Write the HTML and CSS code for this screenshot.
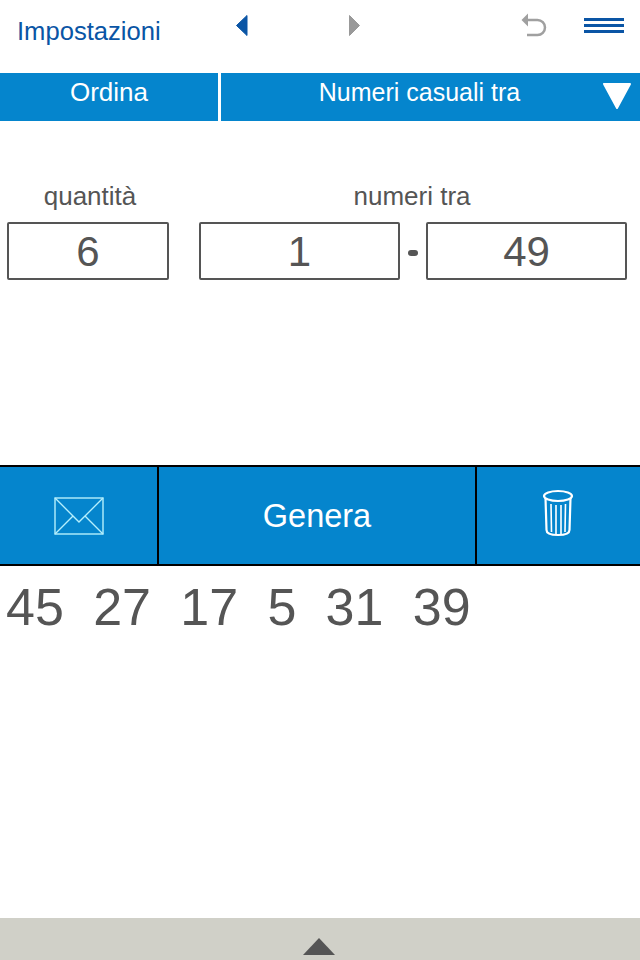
FILE: index.html
```html
<!DOCTYPE html>
<html lang="it">
<head>
    <meta charset="UTF-8">
    <meta name="viewport" content="width=device-width, initial-scale=1.0">
    <title>Numeri casuali</title>
    <link rel="stylesheet" href="styles.css">
</head>
<body>
    <div class="page">
        <header class="top-bar">
            <a class="settings-link">Impostazioni</a>
            <svg class="nav-icon" width="13" height="24" viewBox="0 0 13 24"><path d="M12 2.500V22.500L1.500 12.500Z" fill="#0a55a5" stroke="#0a55a5" stroke-linejoin="round"/></svg>
            <svg class="nav-icon" width="13" height="24" viewBox="0 0 13 24"><path d="M1.500 2.500V22.500L11.500 12.500Z" fill="#999" stroke="#999" stroke-linejoin="round"/></svg>
            <svg class="nav-icon" width="26" height="26" viewBox="0 0 26 26"><path d="M6 7H16.500A7.500 7.500 0 0 1 16.500 22H6" fill="none" stroke="#a0a0a0" stroke-width="2.500"/><path d="M7 0.500V13.500L0.500 7Z" fill="#a0a0a0"/></svg>
            <div class="menu-icon"><span></span><span></span><span></span></div>
        </header>

        <div class="tab-bar">
            <div class="tab tab-sort">Ordina</div>
            <div class="tab tab-mode">
                Numeri casuali tra
                <svg class="tab-arrow" width="30" height="30" viewBox="0 0 30 30"><path d="M2 3H28L15 27Z" fill="#fff" stroke="#fff" stroke-width="2" stroke-linejoin="round"/></svg>
            </div>
        </div>

        <div class="form-row">
            <div class="field field-count">
                <label>quantità</label>
                <div class="value-box">6</div>
            </div>
            <div class="field field-range">
                <label>numeri tra</label>
                <div class="range-inputs">
                    <div class="value-box">1</div>
                    <span class="dash"></span>
                    <div class="value-box">49</div>
                </div>
            </div>
        </div>

        <div class="action-bar">
            <div class="action action-mail">
                <svg width="50" height="38" viewBox="0 0 50 38" fill="none" stroke="#b5effd" stroke-width="1.400"><rect x="1" y="1" width="48" height="36"/><path d="M1 1L25 25L49 1M1 37L19 19M49 37L31 19"/></svg>
            </div>
            <div class="action action-generate">Genera</div>
            <div class="action action-trash">
                <svg class="trash-icon" width="32" height="48" viewBox="0 0 32 48" fill="none" stroke="#fff" stroke-width="2.200"><ellipse cx="16" cy="7" rx="14" ry="5"/><path d="M3.500 9L4.500 41C4.500 44.500 9 46 16 46C23 46 27.500 44.500 27.500 41L28.500 9"/><path d="M9 15L9.500 43M14 16V45M19 16V45M23.500 15L23 43" stroke-width="1.600"/></svg>
            </div>
        </div>

        <div class="results">45  27  17  5  31  39</div>

        <footer class="bottom-bar">
            <svg width="34" height="18" viewBox="0 0 34 18"><path d="M17 0L33 17H1Z" fill="#555"/></svg>
        </footer>
    </div>
</body>
</html>
```

FILE: styles.css
```css
body {
    font-family: 'Liberation Sans', Arial, sans-serif;
    background-color: #fff;
    color: #555;
    margin: 0;
    padding: 0;
}
.page {
    height: 960px;
    display: flex;
    flex-direction: column;
    overflow: hidden;
}
.top-bar {
    height: 73px;
    box-sizing: border-box;
    padding-top: 13px;
    display: grid;
    grid-template-columns: 235px 113px 173px 63px 40px;
    align-items: start;
}
.settings-link {
    color: #0a55a5;
    font-size: 25.6px;
    line-height: 30px;
    padding-left: 17px;
    margin-top: 3px;
}
.nav-icon {
    display: block;
}
.menu-icon {
    display: flex;
    flex-direction: column;
    gap: 3px;
    margin-top: 5px;
}
.menu-icon span {
    display: block;
    height: 3px;
    background-color: #0a55a5;
}
.tab-bar {
    height: 48px;
    display: flex;
    gap: 3px;
}
.tab {
    background-color: #0585cd;
    color: #fff;
    font-size: 26px;
    line-height: 39px;
    text-align: center;
}
.tab-sort {
    width: 218px;
}
.tab-mode {
    flex: 1;
    position: relative;
    padding-right: 22px;
    font-size: 25px;
}
.tab-arrow {
    position: absolute;
    top: 8px;
    right: 8px;
}
.form-row {
    margin-top: 60px;
    padding-left: 7px;
    display: flex;
    gap: 30px;
}
.field label {
    display: block;
    text-align: center;
    font-size: 26px;
    line-height: 30px;
    margin-bottom: 11px;
}
.field-count {
    width: 162px;
}
.field-count label {
    padding-left: 4px;
}
.field-range {
    width: 428px;
}
.field-range label {
    padding-right: 2px;
}
.value-box {
    box-sizing: border-box;
    height: 58px;
    border: 2px solid #555;
    border-radius: 2px;
    font-size: 42px;
    line-height: 56px;
    text-align: center;
}
.range-inputs {
    display: flex;
    align-items: center;
}
.range-inputs .value-box {
    flex: 1;
}
.dash {
    width: 10px;
    height: 6px;
    margin: 3px 8px 0;
    border-radius: 3px;
    background-color: #555;
}
.action-bar {
    margin-top: 185px;
    height: 101px;
    box-sizing: border-box;
    border-top: 2px solid #000;
    border-bottom: 2px solid #000;
    background-color: #0585cd;
    display: flex;
}
.action {
    display: flex;
    align-items: center;
    justify-content: center;
}
.action svg {
    display: block;
}
.action-mail {
    width: 157px;
}
.action-generate {
    width: 316px;
    border-left: 2px solid #000;
    border-right: 2px solid #000;
    color: #fff;
    font-size: 32.5px;
    padding-top: 2px;
    box-sizing: content-box;
}
.action-trash {
    flex: 1;
}
.trash-icon {
    margin: 0 1px 5px 0;
}
.results {
    flex: 1;
    padding: 11px 0 0 6px;
    font-size: 52px;
    line-height: 60px;
    white-space: pre;
    word-spacing: 0.2px;
}
.bottom-bar {
    height: 42px;
    background-color: #d0d0c8;
    display: flex;
    justify-content: center;
    align-items: flex-end;
    padding-right: 2px;
    padding-bottom: 4px;
    box-sizing: border-box;
}
```
